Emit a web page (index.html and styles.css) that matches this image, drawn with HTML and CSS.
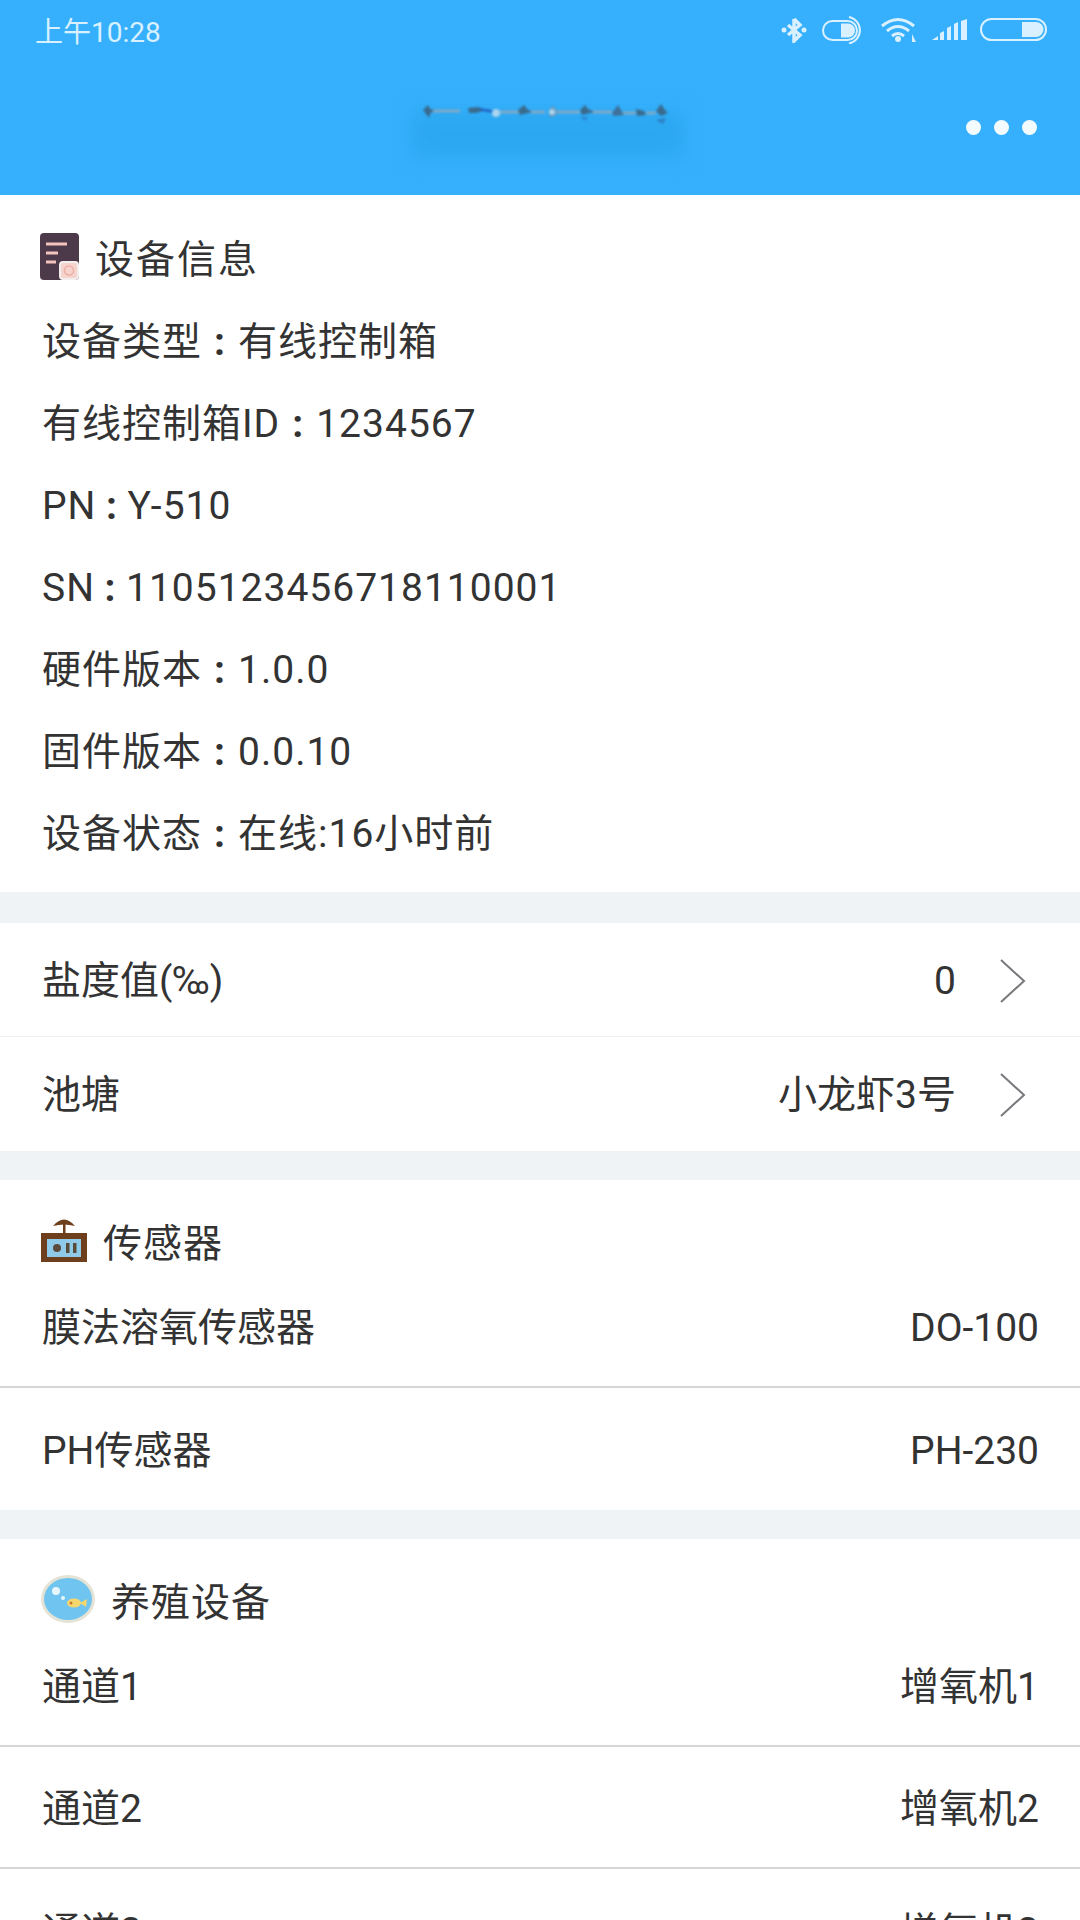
FILE: index.html
```html
<!DOCTYPE html>
<html lang="zh-CN">
<head>
    <meta charset="UTF-8">
    <title>设备信息</title>
    <link rel="stylesheet" href="styles.css">
</head>
<body>

<div class="header">
    <div class="status-bar">
        <span class="time">上午10:28</span>
        <div class="status-icons">
            <svg width="26" height="26" viewBox="0 0 26 26"><path d="M13 2 L13 24 L19 18 L7 8 M13 2 L19 8 L7 18" fill="none" stroke="#d8f0ff" stroke-width="3.500"/><circle cx="3" cy="13" r="2.500" fill="#d8f0ff"/><circle cx="23" cy="13" r="2.500" fill="#d8f0ff"/></svg>
            <svg width="44" height="28" viewBox="0 0 44 28"><rect x="1" y="5" width="34" height="19" rx="9.500" fill="none" stroke="#d8f0ff" stroke-width="2"/><path d="M19 7.500 h7 a7 7 0 0 1 0 14 h-7 z" fill="#d8f0ff"/><path d="M27 1 a13.500 13.500 0 0 1 0 26.500" fill="none" stroke="#d8f0ff" stroke-width="2"/></svg>
            <svg width="36" height="26" viewBox="0 0 36 26"><path d="M1 9 Q17 -4 33 9 M6 14 Q17 5 28 14 M11 19 Q17 14 23 19" fill="none" stroke="#d8f0ff" stroke-width="3"/><circle cx="17" cy="22" r="3" fill="#d8f0ff"/><path d="M31 25 L31 17 L35 25 Z" fill="#d8f0ff"/></svg>
            <svg width="36" height="22" viewBox="0 0 36 22"><path d="M0 21 L6 17 L6 21 Z M8 21 L8 14 L12 12 L12 21 Z M15 21 L15 9 L19 7 L19 21 Z M22 21 L22 5 L26 3 L26 21 Z M29 21 L29 2 L35 0 L35 21 Z" fill="#d8f0ff"/></svg>
            <svg class="icon-battery" width="68" height="24" viewBox="0 0 68 24"><rect x="1" y="1" width="65" height="21" rx="10.500" fill="none" stroke="#d8f0ff" stroke-width="2"/><path d="M42 4 h14 a7.500 7.500 0 0 1 0 15 h-14 z" fill="#d8f0ff"/></svg>
        </div>
    </div>
    <div class="nav-bar">
        <div class="nav-title">
            <div class="smudge"></div>
            <svg class="title-marks" width="250" height="26" viewBox="0 0 250 26">
                <path d="M12 11 H40 M80 12 H100 M110 12 H125 M135 12 H160 M172 12 H192 M202 13 H216 M226 13 H236" stroke="#7fa9c6" stroke-width="3"/>
                <path d="M3 10 L8 5 L10 9 L14 10 L10 14 L9 18 L6 14 Z" fill="#3a6a8c"/>
                <path d="M48 8 L58 7 L66 10 L56 13 L49 13 Z" fill="#3a6a8c"/>
                <path d="M58 8 L72 10 L74 13 L62 11 Z" fill="#1f5fc0"/>
                <circle cx="76" cy="13" r="4" fill="#a9d5ef"/>
                <path d="M98 10 L104 5 L107 9 L112 12 L104 14 L100 15 Z" fill="#3a6a8c"/>
                <path d="M128 11 L133 6 L137 11 L135 16 L130 17 Z" fill="#6d94b3"/>
                <circle cx="132" cy="12" r="3" fill="#a9d5ef"/>
                <path d="M160 10 L165 5 L168 9 L174 12 L166 14 L162 15 Z" fill="#3a6a8c"/>
                <path d="M160 17 L168 17 L165 21 Z" fill="#2f86cf"/>
                <path d="M192 13 L198 5 L202 12 L204 15 L194 16 Z" fill="#3f7099"/>
                <path d="M216 9 L224 11 L226 15 L217 16 Z" fill="#3a6a8c"/>
                <path d="M236 11 L241 4 L245 10 L248 13 L241 16 Z" fill="#3a6a8c"/>
                <path d="M236 20 L246 18 L243 24 Z" fill="#2f7fc4"/>
            </svg>
        </div>
        <div class="dots"><i></i><i></i><i></i></div>
    </div>
</div>

<div class="card info-card">
    <div class="card-title">
        <svg width="39" height="47" viewBox="0 0 39 47">
            <rect x="0" y="0" width="39" height="47" rx="4" fill="#4c3a4a"/>
            <path d="M6 11 H27 M6 20 H18 M6 29 H16" stroke="#f2c4bb" stroke-width="3"/>
            <rect x="20" y="29" width="18" height="17" rx="3" fill="#f6d3cc" stroke="#f4efef" stroke-width="2"/>
            <circle cx="29" cy="37.500" r="4.500" fill="none" stroke="#eeb0a6" stroke-width="1.500"/>
        </svg>
        <span>设备信息</span>
    </div>
    <div class="info-row">设备类型<span class="colon">:</span>有线控制箱</div>
    <div class="info-row">有线控制箱ID<span class="colon">:</span>1234567</div>
    <div class="info-row">PN<span class="colon short">:</span>Y-510</div>
    <div class="info-row">SN<span class="colon short">:</span>1105123456718110001</div>
    <div class="info-row">硬件版本<span class="colon">:</span>1.0.0</div>
    <div class="info-row">固件版本<span class="colon">:</span>0.0.10</div>
    <div class="info-row">设备状态<span class="colon">:</span>在线:16小时前</div>
</div>

<div class="card">
    <div class="link-row">
        <span>盐度值(‰)</span>
        <span class="link-value">0 <svg width="27" height="44" viewBox="0 0 27 44"><path d="M2 1 L25 22 L2 43" fill="none" stroke="#77797c" stroke-width="2"/></svg></span>
    </div>
    <div class="link-row">
        <span>池塘</span>
        <span class="link-value">小龙虾3号 <svg width="27" height="44" viewBox="0 0 27 44"><path d="M2 1 L25 22 L2 43" fill="none" stroke="#77797c" stroke-width="2"/></svg></span>
    </div>
</div>

<div class="card">
    <div class="group-title">
        <svg width="46" height="44" viewBox="0 0 46 44">
            <path d="M12 8 Q23 -5 34 8 Q23 5 12 8 Z" fill="#6e3f1c"/>
            <rect x="22" y="5" width="2.500" height="10" fill="#6e3f1c"/>
            <rect x="0" y="15" width="46" height="29" fill="#6e3f1c"/>
            <rect x="6" y="21" width="34" height="18" fill="#8fcbe8"/>
            <circle cx="16" cy="30" r="4" fill="#5a4a3a"/>
            <rect x="25" y="25" width="3.500" height="10" fill="#5a4a3a"/><rect x="32" y="25" width="3.500" height="10" fill="#5a4a3a"/>
        </svg>
        <span>传感器</span>
    </div>
    <div class="data-row"><span>膜法溶氧传感器</span><span>DO-100</span></div>
    <div class="data-row tall"><span>PH传感器</span><span>PH-230</span></div>
</div>

<div class="card">
    <div class="group-title">
        <svg width="54" height="48" viewBox="0 0 54 48">
            <ellipse cx="27" cy="24" rx="27" ry="24" fill="#e4e3d6"/>
            <ellipse cx="27" cy="24" rx="24" ry="21" fill="#6fc4f0"/>
            <circle cx="15" cy="16" r="4" fill="#e6f6fd"/><circle cx="22" cy="23" r="2" fill="#e6f6fd"/>
            <ellipse cx="33" cy="28" rx="7" ry="4.500" fill="#f5d76e"/>
            <path d="M39 28 L46 24 L45 32 Z" fill="#f5d76e"/>
            <circle cx="30" cy="28" r="1.500" fill="#c9752e"/>
        </svg>
        <span>养殖设备</span>
    </div>
    <div class="data-row"><span>通道1</span><span>增氧机1</span></div>
    <div class="data-row tall"><span>通道2</span><span>增氧机2</span></div>
    <div class="data-row tall"><span>通道3</span><span>增氧机3</span></div>
</div>

</body>
</html>
```

FILE: styles.css
```css
html, body {
    margin: 0;
    padding: 0;
    height: 1920px;
    overflow: hidden;
}

body {
    width: 1080px;
    background-color: #eff3f6;
    font-family: Roboto, "Noto Sans CJK SC", sans-serif;
    font-size: 39px;
    color: #333;
}

/* Blue top area */
.header {
    height: 195px;
    background-color: #36b0fc;
}

.status-bar {
    height: 60px;
    padding: 0 32px 0 35px;
    display: flex;
    justify-content: space-between;
    align-items: center;
}

.time {
    font-size: 28px;
    color: #d8f0ff;
}

.status-icons {
    display: flex;
    align-items: center;
    gap: 15px;
}

.icon-battery {
    margin-left: -3px;
}

.nav-bar {
    height: 135px;
    padding-right: 43px;
    display: flex;
    justify-content: flex-end;
    align-items: center;
    position: relative;
}

.nav-title {
    position: absolute;
    left: 405px;
    top: 40px;
    width: 285px;
    height: 63px;
}

.smudge {
    position: absolute;
    left: 6px;
    right: 6px;
    top: 12px;
    bottom: 6px;
    background-color: #2ba7f0;
    filter: blur(10px);
}

.title-marks {
    position: absolute;
    left: 15px;
    top: 0;
    filter: blur(0.8px);
}

.dots {
    display: flex;
    gap: 13px;
}

.dots i {
    display: block;
    width: 15px;
    height: 15px;
    border-radius: 50%;
    background-color: #f4fbff;
}

/* White blocks */
.card {
    background-color: #fff;
    margin-bottom: 29px;
}

.info-card {
    padding-bottom: 19px;
    margin-bottom: 31px;
}

.card-title {
    height: 104px;
    box-sizing: border-box;
    padding: 18px 40px 0;
    display: flex;
    align-items: center;
    gap: 16px;
    letter-spacing: 2px;
}

.info-row {
    height: 82px;
    box-sizing: border-box;
    line-height: 75px;
    padding: 6px 42px 0;
    letter-spacing: 1px;
}

.colon {
    display: inline-block;
    width: 36px;
    text-align: center;
    font-weight: 700;
}

.colon.short {
    width: 31px;
}

.link-row {
    height: 114px;
    box-sizing: border-box;
    padding: 2px 54px 0 42px;
    display: flex;
    justify-content: space-between;
    align-items: center;
    line-height: 50px;
    border-bottom: 1px solid #eff1f3;
}

.link-row:last-child {
    border-bottom: none;
}

.link-value {
    display: flex;
    align-items: center;
    gap: 43px;
}

.group-title {
    height: 90px;
    box-sizing: border-box;
    padding: 30px 41px 0;
    display: flex;
    align-items: center;
    gap: 16px;
    letter-spacing: 1px;
}

.data-row {
    height: 118px;
    padding: 0 41px 0 42px;
    display: flex;
    justify-content: space-between;
    align-items: center;
    line-height: 50px;
    border-bottom: 2px solid #d4d6d8;
    box-sizing: border-box;
}

.data-row.tall {
    height: 122px;
    padding-top: 4px;
}

.card .data-row:last-child {
    border-bottom: none;
}
```
